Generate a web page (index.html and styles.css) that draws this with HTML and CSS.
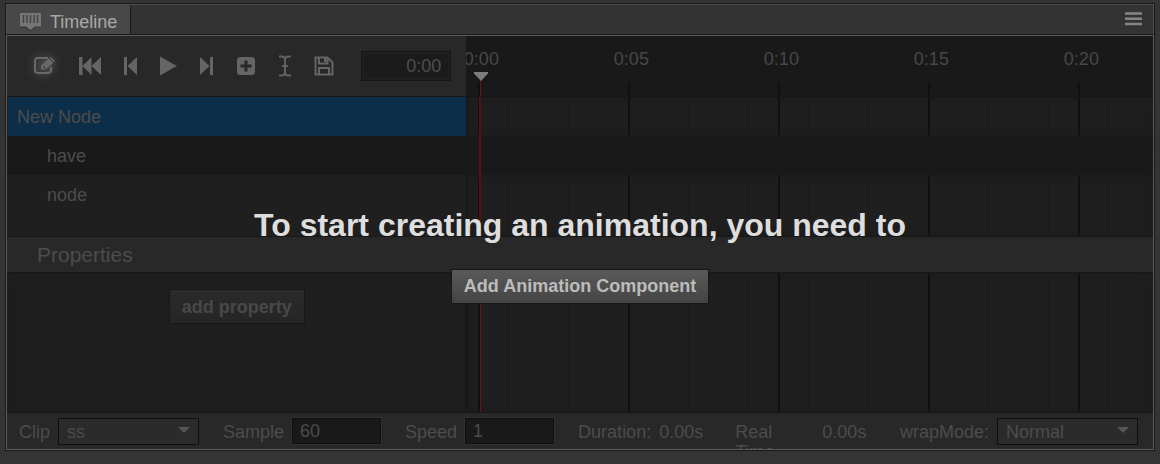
FILE: index.html
```html
<!DOCTYPE html>
<html lang="en">
<head>
<meta charset="utf-8">
<title>Timeline</title>
<link rel="stylesheet" href="styles.css">
</head>
<body>
<main class="panel">
  <header class="tabs">
    <div class="tab">
      <svg class="tab-icon" width="23" height="20" viewBox="0 0 23 20" aria-hidden="true">
        <path d="M1 3.500h21v12h-6l-5 4-5-4H1z" fill="#353535"/>
        <path d="M1 1h21v13.500h-6l-4.500 3.500L7 14.500H1z" fill="#767676"/>
        <path d="M4.500 3v8M8 3v8M11.500 3v8M15 3v8M18.500 3v8" stroke="#444" stroke-width="1.500"/>
      </svg>
      <span>Timeline</span>
    </div>
    <button class="menu" aria-label="Panel menu">
      <svg width="17" height="14" viewBox="0 0 17 14"><path d="M0 1.500h17M0 6.800h17M0 12h17" stroke="#858585" stroke-width="2.600"/></svg>
    </button>
  </header>

  <div class="body">
    <div class="split ruler-row">
      <div class="toolbar">
        <button class="tool active" aria-label="Edit">
          <svg width="22" height="20" viewBox="0 0 22 20" fill="none" stroke="#686868" stroke-width="2">
            <path d="M14 2H4Q1 2 1 5v9q0 3 3 3h10q3 0 3-3v-3"/>
            <path d="M7 13.500V9.500L16.500 1 21 5 12 13.500z" fill="#686868" stroke="none"/>
            <path d="M15.200 2.300l4.500 4.300M9 10l3 3" stroke="#2d2d2d" stroke-width="1"/>
          </svg>
        </button>
        <button class="tool" aria-label="First frame">
          <svg width="22" height="20" viewBox="0 0 22 20" fill="#656565"><path d="M0 1h3.500v18H0zM12.500 1v18L3.500 10zM22 1v18l-9.500-9z"/></svg>
        </button>
        <button class="tool" aria-label="Previous frame">
          <svg width="13" height="20" viewBox="0 0 13 20" fill="#656565"><path d="M0 1h3v18H0zM13 1v18L3.500 10z"/></svg>
        </button>
        <button class="tool" aria-label="Play">
          <svg width="17" height="20" viewBox="0 0 17 20" fill="#656565"><path d="M0 0.500L17 10 0 19.500z"/></svg>
        </button>
        <button class="tool" aria-label="Next frame">
          <svg width="13" height="20" viewBox="0 0 13 20" fill="#656565"><path d="M10 1h3v18h-3zM0 1v18l9.500-9z"/></svg>
        </button>
        <button class="tool" aria-label="Add keyframe">
          <svg width="20" height="20" viewBox="0 0 20 20"><rect x="1" y="1" width="18" height="18" rx="3.500" fill="#656565"/><path d="M10 4.500v11M4.500 10h11" stroke="#282828" stroke-width="3"/></svg>
        </button>
        <button class="tool" aria-label="Insert event">
          <svg width="12" height="22" viewBox="0 0 12 22" fill="none" stroke="#606060" stroke-width="2"><path d="M0 1.500h2.500Q6 1.500 6 4.500v13q0 3-3.500 3H0M12 1.500H9.500Q6 1.500 6 4.500v13q0 3 3.500 3H12M3 11h6"/></svg>
        </button>
        <button class="tool" aria-label="Save">
          <svg width="20" height="20" viewBox="0 0 20 20" fill="none" stroke="#656565" stroke-width="2"><path d="M1.500 1.500h12l5 5v12h-17zM5 18v-6h10v6"/><path d="M5 2v5.500h8.500V2" /><path d="M10 2h2.500v4H10z" fill="#656565" stroke="none"/></svg>
        </button>
        <input class="time" type="text" value="0:00" aria-label="Current time">
      </div>
      <div class="ruler">
        <div class="labels"><span>0:00</span><span>0:05</span><span>0:10</span><span>0:15</span><span>0:20</span></div>
        <div class="ticks"></div>
        <svg class="marker" width="14" height="24" viewBox="0 0 14 24" aria-hidden="true"><path d="M6 8h1v16H6z" fill="#6b1417"/><path d="M0 0h14v1.500L7 9 0 1.500z" fill="#7c7c7c"/></svg>
      </div>
    </div>

    <div class="split row selected"><div class="name">New Node</div><div class="track"></div></div>
    <div class="split row dark"><div class="name child">have</div><div class="track plain"></div></div>
    <div class="split row last"><div class="name child">node</div><div class="track"></div></div>
    <h2 class="properties">Properties</h2>
    <div class="split prop-area">
      <div class="prop-list"><button class="btn dim">add property</button></div>
      <div class="track thin"></div>
    </div>

    <footer class="footer">
      <label for="clip">Clip</label>
      <div class="select"><select id="clip"><option>ss</option></select></div>
      <label class="group" for="sample">Sample</label>
      <input id="sample" class="num" type="text" value="60">
      <label class="group" for="speed">Speed</label>
      <input id="speed" class="num" type="text" value="1">
      <span class="group">Duration:</span>
      <span class="value">0.00s</span>
      <span class="real">Real Time</span>
      <span class="value">0.00s</span>
      <label class="wrap-label" for="wrap">wrapMode:</label>
      <div class="select"><select id="wrap"><option>Normal</option></select></div>
    </footer>

    <section class="overlay">
      <h1>To start creating an animation, you need to</h1>
      <button class="btn">Add Animation Component</button>
    </section>
  </div>
</main>
</body>
</html>
```
FILE: styles.css
```css
* { box-sizing: border-box; }

body {
  margin: 0;
  padding: 3px 5px 13px;
  min-height: 100vh;
  display: flex;
  background: #343434;
  color: #4c4c4c;
  font: 18px/20px "Liberation Sans", Arial, sans-serif;
}

button, input, select { font: inherit; color: inherit; margin: 0; }

.panel {
  flex: 1;
  display: flex;
  flex-direction: column;
  min-width: 0;
  border: 1px solid #191919;
  background: #333;
}

.tabs {
  display: flex;
  justify-content: space-between;
  height: 31px;
  border: 1px solid #4d4d4d;
  border-bottom: 0;
}

.tab {
  display: flex;
  align-items: center;
  gap: 8px;
  padding: 3px 13px 0 12px;
  background: #484848;
  border-right: 1px solid #191919;
  color: #a8a8a8;
}

.menu {
  display: flex;
  flex: none;
  align-items: center;
  padding: 0 11px 2px;
  border: 0;
  background: none;
}

.body {
  position: relative;
  flex: 1;
  display: flex;
  flex-direction: column;
  border: 1px solid #5c5c5c;
  box-shadow: 0 -1px #191919;
  background: #1f1f1f;
  overflow: hidden;
}

.split {
  display: grid;
  grid-template-columns: calc(40% + 1px) 1fr;
}

.ruler-row { height: 61px; border-bottom: 1px solid #161616; }

.toolbar {
  display: flex;
  align-items: center;
  justify-content: space-between;
  padding: 0 15px 0 27px;
  background: #282828;
}

.tool {
  display: flex;
  padding: 0;
  border: 0;
  background: none;
}

.tool.active { filter: drop-shadow(0 0 5px #666); }

.time {
  width: 90px;
  height: 30px;
  margin-left: 4px;
  padding: 0 9px;
  border: 1px solid #151515;
  background: #1b1b1b;
  box-shadow: inset 0 0 0 2px #1f1f1f;
  color: #4e4e4e;
  text-align: right;
}

.ruler {
  position: relative;
  display: flex;
  flex-direction: column;
  justify-content: space-between;
  background: #191919;
  color: #484848;
  overflow: hidden;
}

.labels {
  display: flex;
  margin: 13px 0 0 -60px;
}

.labels span { flex: none; width: 150px; text-align: center; }

.ticks, .track {
  background-image:
    linear-gradient(90deg, #101010 2px, transparent 2px),
    linear-gradient(90deg, #1b1b1b 1px, transparent 1px);
  background-size: 150px 100%, 30px 100%;
  background-position: 11px 0;
}

.ticks { height: 14px; background-position: 12px 0; }

.marker { position: absolute; top: 36px; left: 8px; }

.track {
  display: flex;
  padding-left: 13px;
  border-left: 1px solid #151515;
  background-color: #1f1f1f;
  box-shadow: inset 0 0 8px #1a1a1a;
}

.track::before {
  content: "";
  flex: none;
  width: 2px;
  margin-left: -1px;
  background: #591012;
}

.track.thin::before { width: 1px; margin-left: 0; background: #6b1417; }

.track.plain { background-image: none; background-color: #191919; }

.row { height: 39px; }

.name { display: flex; align-items: center; padding-left: 10px; }

.child { padding-left: 40px; }

.selected .name {
  margin-left: 1px;
  padding-left: 9px;
  background: #0c2e48;
}

.dark { background: #191919; }

.last { height: 61px; }

.last .name { height: 39px; }

.properties {
  margin: 0;
  padding: 0 30px;
  border: solid #171717;
  border-width: 1px 0;
  background: #282828;
  font-size: 21px;
  font-weight: normal;
  line-height: 35px;
}

.prop-area { flex: 1; }

.prop-list {
  display: flex;
  justify-content: center;
  align-items: flex-start;
  padding-top: 16px;
  box-shadow: inset 0 0 8px #1a1a1a;
}

.btn {
  height: 35px;
  padding: 0 12px;
  border: 1px solid #171717;
  background: linear-gradient(#5a5a5a, #444);
  color: #bcbcbc;
  font-weight: bold;
}

.btn.dim {
  background: linear-gradient(#2b2b2b, #252525);
  color: #484848;
}

.footer {
  display: flex;
  align-items: flex-start;
  height: 37px;
  padding: 5px 15px 0 12px;
  border-top: 1px solid #171717;
  background: #282828;
  white-space: nowrap;
  overflow: hidden;
}

.footer > label, .footer > span { margin-top: 4px; }

.select { position: relative; margin-left: 8px; }

.select select {
  display: block;
  width: 141px;
  height: 27px;
  padding: 0 8px;
  border: 1px solid #0f0f0f;
  border-radius: 0;
  background: #2b2b2b;
  appearance: none;
}

.select::after {
  content: "";
  position: absolute;
  top: 9px;
  right: 9px;
  border: 6px solid transparent;
  border-top-color: #555;
  border-bottom: 0;
  pointer-events: none;
}

.group { margin-left: 24px; }

.num {
  width: 89px;
  height: 26px;
  margin-left: 8px;
  padding: 0 7px;
  border: 1px solid #0f0f0f;
  outline: 1px solid #303030;
  background: #191919;
}

.value { margin-left: 8px; }

.real { width: 79px; margin-left: 32px; white-space: normal; padding-right: 30px; }

.wrap-label { margin-left: auto; }

.overlay {
  position: absolute;
  inset: 0;
  display: flex;
  flex-direction: column;
  align-items: center;
  justify-content: center;
  gap: 25px;
  padding-top: 24px;
}

.overlay h1 {
  margin: 0;
  color: #dedede;
  font-size: 32px;
  line-height: 38px;
}
```
